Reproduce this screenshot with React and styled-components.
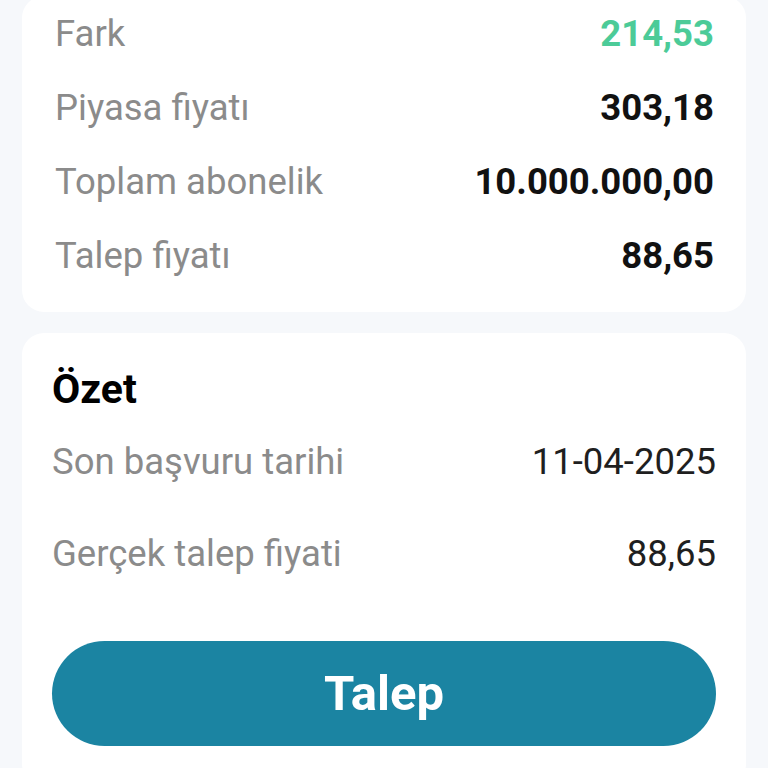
import React from "react";
import styled, { createGlobalStyle } from "styled-components";

const Global = createGlobalStyle`
  html, body { margin: 0; padding: 0; background: #f6f8fb; }
  body { font-family: Roboto, "Noto Sans", "Liberation Sans", sans-serif; overflow: hidden; }
`;

const Page = styled.div`
  width: 768px;
  height: 768px;
  overflow: hidden;
  background: #f6f8fb;
  padding: 0 22px;
  box-sizing: border-box;
  display: flex;
  flex-direction: column;
  gap: 21px;
`;

const Card = styled.section`
  background: #ffffff;
  border-radius: 22px;
  padding: ${(p) => p.$pad};
  margin-top: ${(p) => p.$mt || "0"};
  display: flex;
  flex-direction: column;
  flex-shrink: 0;
`;

const Row = styled.div`
  display: flex;
  align-items: center;
  justify-content: space-between;
  height: ${(p) => p.$h}px;
  margin-top: ${(p) => p.$mt || 0}px;
`;

const Label = styled.span`
  font-size: 36.5px;
  color: #8b8b8b;
  font-weight: 400;
`;

const Value = styled.span`
  font-size: 36.5px;
  font-weight: ${(p) => (p.$bold ? 700 : 400)};
  color: ${(p) => p.$color || "#111111"};
`;

const Title = styled.h2`
  margin: 0;
  font-size: 41px;
  line-height: 40px;
  font-weight: 700;
  color: #000;
`;

const Button = styled.button`
  margin-top: 42px;
  height: 105px;
  width: 100%;
  border: none;
  border-radius: 60px;
  background: #1b84a2;
  color: #ffffff;
  font-family: inherit;
  font-size: 49px;
  font-weight: 700;
`;

const summary = [
  ["Fark", "214,53", "#4ccb98"],
  ["Piyasa fiyatı", "303,18"],
  ["Toplam abonelik", "10.000.000,00"],
  ["Talep fiyatı", "88,65"],
];

export default function App() {
  return (
    <>
      <Global />
      <Page>
        <Card $pad="0 32px 20px 33px" $mt="-4px">
          {summary.map(([l, v, c]) => (
            <Row key={l} $h={74}>
              <Label>{l}</Label>
              <Value $bold $color={c}>{v}</Value>
            </Row>
          ))}
        </Card>
        <Card $pad="36px 30px 40px 30px">
          <Title>Özet</Title>
          <Row $h={92} $mt={6}>
            <Label>Son başvuru tarihi</Label>
            <Value $color="#1f1f1f">11-04-2025</Value>
          </Row>
          <Row $h={92}>
            <Label>Gerçek talep fiyati</Label>
            <Value $color="#1f1f1f">88,65</Value>
          </Row>
          <Button>Talep</Button>
        </Card>
      </Page>
    </>
  );
}
